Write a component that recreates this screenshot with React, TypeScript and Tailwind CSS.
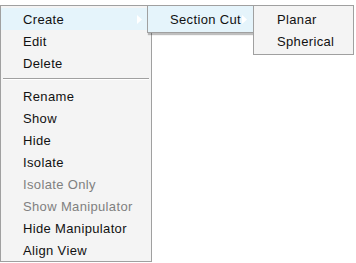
import React from "react";

type Item = { label: string; disabled?: boolean; sub?: boolean; active?: boolean };

const topItems: Item[] = [
  { label: "Create", sub: true, active: true },
  { label: "Edit" },
  { label: "Delete" },
];

const bottomItems: Item[] = [
  { label: "Rename" },
  { label: "Show" },
  { label: "Hide" },
  { label: "Isolate" },
  { label: "Isolate Only", disabled: true },
  { label: "Show Manipulator", disabled: true },
  { label: "Hide Manipulator" },
  { label: "Align View" },
];

function Arrow() {
  return (
    <svg width="5" height="9" viewBox="0 0 5 9" className="shrink-0">
      <path d="M0 0 L5 4.5 L0 9 Z" fill="#ffffff" />
    </svg>
  );
}

function Row({ item }: { item: Item }) {
  return (
    <div
      className={`flex h-[22px] items-center pl-[22px] pr-[9px] ${
        item.active ? "bg-[#e5f4fb]" : ""
      } ${item.disabled ? "text-[#808080]" : "text-[#111111]"}`}
    >
      <span className="flex-1">{item.label}</span>
      {item.sub && <Arrow />}
    </div>
  );
}

export default function App() {
  return (
    <div
      className="relative h-[263px] w-[356px] bg-white pt-[5px] text-[13px] leading-none tracking-[0.35px]"
      style={{ fontFamily: '"Liberation Sans", Arial, sans-serif' }}
    >
      <div className="h-[257px] w-[152px] border border-[#a0a0a0] bg-[#f4f4f4] pt-[2px]">
        {topItems.map((it) => (
          <Row key={it.label} item={it} />
        ))}
        <div className="flex h-[11px] flex-col px-[2px] pt-[4px]">
          <div className="h-px bg-[#a0a0a0]" />
          <div className="h-px bg-white" />
        </div>
        {bottomItems.map((it) => (
          <Row key={it.label} item={it} />
        ))}
      </div>

      <div className="absolute left-[147px] top-[5px] flex h-[28px] w-[107px] items-center border border-[#a0a0a0] bg-[#e5f4fb] pl-[22px] pr-[6px] text-[#111111] shadow-[1px_2px_1px_rgba(0,0,0,0.25)]">
        <span className="flex-1">Section Cut</span>
        <Arrow />
      </div>

      <div className="absolute left-[253px] top-[5px] h-[50px] w-[101px] border border-[#a0a0a0] bg-[#f4f4f4] pt-[2px] text-[#111111]">
        <div className="flex h-[22px] items-center pl-[23px]">Planar</div>
        <div className="flex h-[22px] items-center pl-[23px]">Spherical</div>
      </div>
    </div>
  );
}
